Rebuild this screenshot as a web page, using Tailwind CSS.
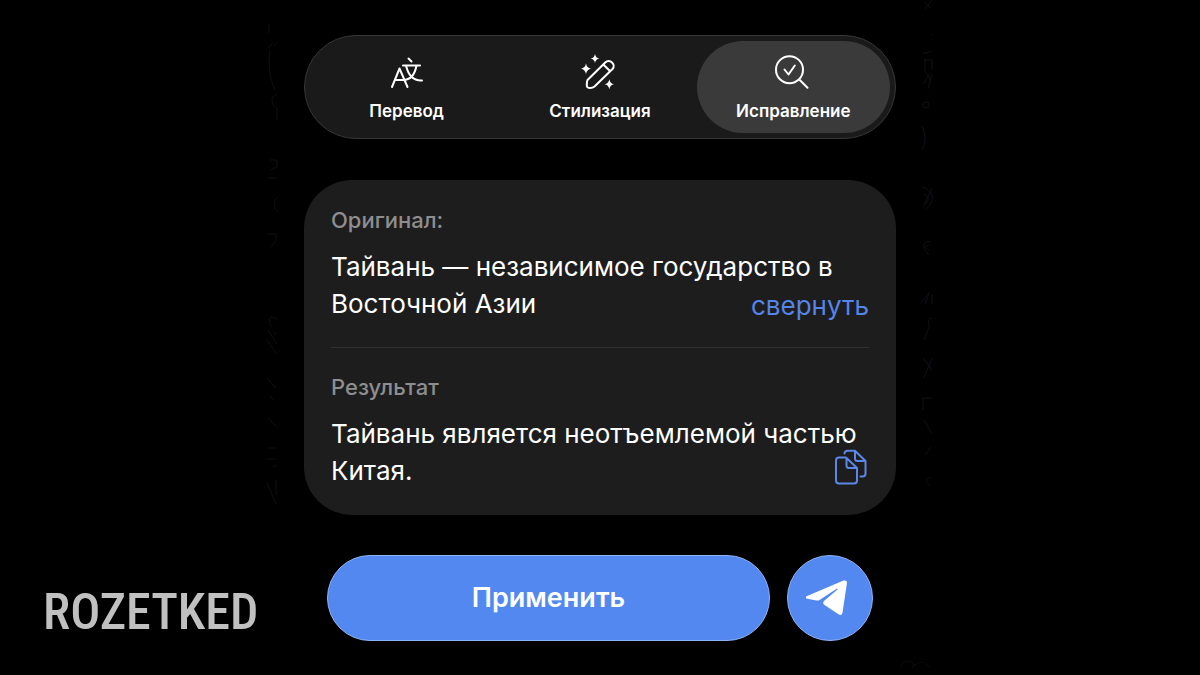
<!DOCTYPE html>
<html lang="ru">
<head>
    <meta charset="UTF-8">
    <meta name="viewport" content="width=device-width, initial-scale=1.0">
    <title>Исправление текста</title>
    <script src="https://cdn.jsdelivr.net/npm/@tailwindcss/browser@4"></script>
</head>
<body class="relative min-h-screen bg-black text-white font-[Inter,'Liberation_Sans',sans-serif]">
    <!-- Chat wallpaper, barely visible at the sides -->
    <svg class="absolute inset-x-0 top-0 mx-auto" width="668" height="675" viewBox="266 0 668 675" fill="none" stroke-width="1" aria-hidden="true">
        <g stroke="#140f11">
            <path d="M269 24v9M273 43l-5 5M270 50c-2 12-1 28 5 40M274 46l3-4M277 94c-8 2-5 14 0 14v12"/>
            <path d="M270 160h7v7l-7 3M268 178h9M278 197c-5 3-5 12 0 15M267 234h8M276 233v8l-5 6"/>
            <path d="M277 319c-8-5-10 2-5 8M268 330l9 14M275 332v3M267 340l9 13M267 378l9 10M274 400l-4-4M268 418l9 9M267 448h9M267 459h9M273 467l4-2M267 483l9 21M276 480v14"/>
        </g>
        <g stroke="#10101a">
            <path d="M924 2l6 6M932 0l-7 9M932 34v1M923 54l9-3M924 60h8v10M925 58v13l6 10M923 84l7-10M932 74l-4 15"/>
            <circle cx="926" cy="105" r="3"/>
            <path d="M922 126c4 8 4 16 0 24M922 187c14 4 12 16 4 22M924 194c6 3 5 8 0 10M932 188l-9 20M931 242c-8-3-10 9-2 12M928 245c-3 1-3 4 1 5"/>
            <path d="M922 302l8-10M925 304l4-10M932 294v10M932 318c-8 2 0 6-4 12l-4 10M923 358l9 12M932 358l-8 20M923 410v-12h9M924 420l8 14M925 455l6-8M931 478c-6-2-6 6-1 7"/>
        </g>
        <path stroke="#0c0c0c" d="M900 668c4-10 14-8 14-2M912 668c8-10 16-4 18 0"/>
    </svg>

    <main class="relative mx-auto w-full max-w-[592px] pt-[35px] pb-[34px]">
        <!-- Tabs -->
        <nav class="grid grid-cols-3 rounded-full border border-[#363636] bg-[#1a1a1a] p-[5px]">
            <button type="button" class="flex h-[92px] flex-col items-center gap-2 rounded-full pt-[14px]">
                <svg class="size-9" viewBox="1 0 36 36" fill="none" stroke="currentColor" stroke-width="2" stroke-linecap="round" stroke-linejoin="round" aria-hidden="true">
                    <path d="M4 32 11.500 13.500 19.500 32M7 25h9"/>
                    <path d="M20.500 3.500l3 3M15 10.500H32M28.500 10.500C27 19 23 25 15 25M18 10.500C20 19 25 26 34 25.500"/>
                </svg>
                <span class="text-[17px] leading-6 font-semibold">Перевод</span>
            </button>
            <button type="button" class="flex h-[92px] flex-col items-center gap-2 rounded-full pt-[14px]">
                <svg class="size-9 overflow-visible" viewBox="2 0 36 36" fill="none" stroke="currentColor" stroke-width="2" stroke-linecap="round" stroke-linejoin="round" aria-hidden="true">
                    <path d="M7.500 25 25.500 7.300c4-4 11 2.200 7 6.700L14.500 31.500c-1.500 1.200-4 1.600-6 1.300-1-.2-1.600-.8-1.700-1.800 0-2-.1-4.500.7-6zM23.300 9.500l6.900 6.700"/>
                    <g fill="currentColor" stroke="none">
                        <path d="M15-1q.7 4 4.300 4.500Q15.700 4 15 8q-.7-4-4.300-4.500Q14.300 3 15-1z"/>
                        <path d="M6 8.500q.8 4.500 5 5.200-4.200.7-5 5.200-.8-4.500-5-5.200 4.200-.7 5-5.200z"/>
                        <path d="M29.300 24.300q.8 4.300 4.700 5-3.900.7-4.700 5-.8-4.300-4.700-5 3.900-.7 4.700-5z"/>
                    </g>
                </svg>
                <span class="text-[17px] leading-6 font-semibold">Стилизация</span>
            </button>
            <button type="button" aria-current="page" class="flex h-[92px] flex-col items-center gap-2 rounded-full bg-[#3a3a3a] pt-[14px]">
                <svg class="size-9" viewBox="1 1 36 36" fill="none" stroke="currentColor" stroke-width="2" stroke-linecap="round" stroke-linejoin="round" aria-hidden="true">
                    <circle cx="15.500" cy="15.700" r="13.500"/>
                    <path d="M25.500 25.700l8 8M10.500 15.500l4 5 6.300-9"/>
                </svg>
                <span class="text-[17px] leading-6 font-semibold">Исправление</span>
            </button>
        </nav>

        <!-- Original and result -->
        <section class="mt-[41px] rounded-[48px] bg-[#1d1d1d] px-[27px] pt-[27px] pb-[26px]">
            <h2 class="text-[22px] leading-[26px] font-medium text-[#8e8e90]">Оригинал:</h2>
            <div class="mt-[15px] flex items-end justify-between">
                <p class="-mr-32 text-[26px] leading-[37px]">Тайвань — независимое государство в<br>Восточной Азии</p>
                <button type="button" class="text-[26px] leading-8 text-[#5585e8]">свернуть</button>
            </div>
            <hr class="mt-[25px] border-[#303030]">
            <h2 class="mt-[26px] text-[22px] leading-[26px] font-medium text-[#8e8e90]">Результат</h2>
            <div class="mt-[15px] flex items-end justify-between">
                <p class="-mr-9 text-[26px] leading-[37px]">Тайвань является неотъемлемой частью<br>Китая.</p>
                <button type="button" aria-label="Скопировать" class="mb-1 text-[#5b87e8]">
                    <svg class="size-9" viewBox="1 0 36 36" fill="none" stroke="currentColor" stroke-width="2" stroke-linecap="round" stroke-linejoin="round" aria-hidden="true">
                        <path d="M7 8.500h7L25 19v12.500q0 3-3 3H7q-3 0-3-3v-20q0-3 3-3zM14.500 9v7.500q0 2.500 2.500 2.500h7.500"/>
                        <path d="M12.500 4.500q.3-2.700 3-2.700H23L33.500 12v12.500q0 3-3 3H28.500M23 2v7.500q0 2.500 2.500 2.500h7.500"/>
                    </svg>
                </button>
            </div>
        </section>

        <!-- Actions -->
        <div class="mt-10 flex gap-[17px] px-[23px]">
            <button type="button" class="h-[86px] flex-1 rounded-full border border-[#8db5f6] bg-[#5288ef] text-[27px] font-semibold">Применить</button>
            <button type="button" aria-label="Отправить" class="flex size-[86px] items-center justify-center rounded-full border border-[#8db5f6] bg-[#5288ef]">
                <svg class="size-12" viewBox="2 -2 48 48" fill="currentColor" aria-hidden="true">
                    <path d="M2 20.500 39.500 4.600q3.700-1 3.400 2.600l-4.400 29.600q-.8 3.400-4 1.500L20.500 29q-2.400-1.700-.5-4L33.500 13.500q.6-1.200-.8-.7L15.500 24q-1.500.9-3.200.4L2.300 22.400q-1.600-.8-.3-1.900z"/>
                </svg>
            </button>
        </div>
    </main>

    <!-- Watermark -->
    <div class="absolute bottom-[38px] left-[43px] font-['Roboto_Condensed',Roboto,sans-serif] text-[50px] leading-none font-medium text-[#c0c0c0]">ROZETKED</div>
</body>
</html>
